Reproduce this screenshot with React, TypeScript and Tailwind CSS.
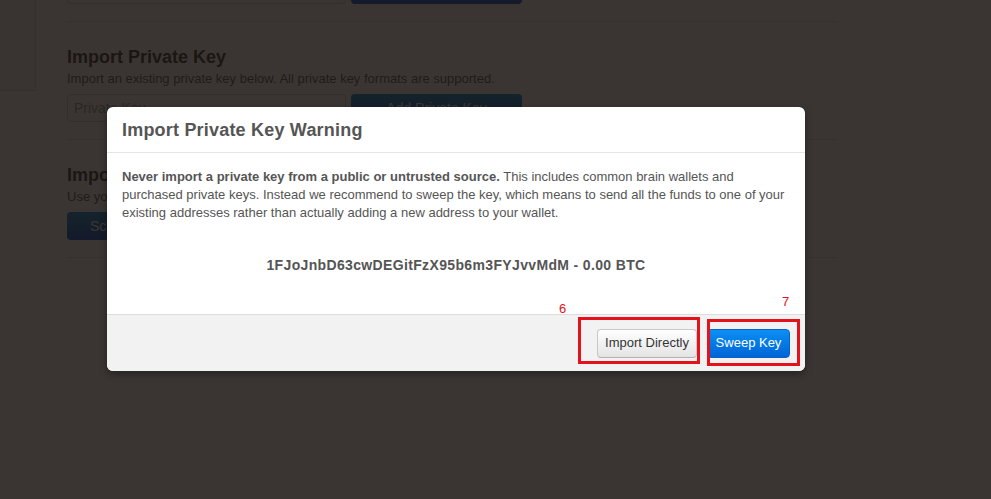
import React from "react";

const Section = ({
  title,
  subtitle,
  children,
}: {
  title: string;
  subtitle: string;
  children: React.ReactNode;
}) => (
  <div>
    <div className="mt-[17px] border-t border-b border-t-[#e5e5e5] border-b-white" />
    <h3 className="mt-[24px] text-[18px] leading-[20px] font-bold text-[#333]">{title}</h3>
    <p className="mt-[3px] text-[13px] leading-[18px] text-[#555]">{subtitle}</p>
    <div className="mt-[6px] flex">{children}</div>
  </div>
);

const App = () => {
  return (
    <div className="relative w-[991px] h-[499px] overflow-hidden bg-white font-['Liberation_Sans',Arial,sans-serif]">
      {/* page behind the modal */}
      <div className="flex">
        <div className="w-[36px] h-[91px] shrink-0 border-r border-b border-[#dcdcdc] bg-[#f7f7f7]" />
        <div className="ml-[31px] w-[770px]">
          <div className="mt-[-23px] flex">
            <div className="w-[279px] h-[27px] border border-[#ccc] rounded-[4px] bg-white" />
            <div className="ml-[5px] w-[171px] h-[27px] rounded-[4px] bg-gradient-to-b from-[#0088cc] to-[#0044cc]" />
          </div>
          <Section
            title="Import Private Key"
            subtitle="Import an existing private key below. All private key formats are supported."
          >
            <div className="w-[279px] h-[28px] border border-[#ccc] rounded-[4px] bg-white px-[6px] text-[14px] leading-[26px] text-[#999]">
              Private Key
            </div>
            <button className="ml-[5px] w-[171px] h-[28px] rounded-[4px] bg-gradient-to-b from-[#0088cc] to-[#0044cc] text-white text-[14px]">
              Add Private Key
            </button>
          </Section>
          <Section
            title="Import Watch Only Address"
            subtitle="Use your paper wallet or an address you only want to watch."
          >
            <button className="w-[140px] h-[28px] rounded-[4px] bg-gradient-to-b from-[#0088cc] to-[#0044cc] text-white text-[14px]">
              Scan QR Code
            </button>
          </Section>
          <div className="mt-[17px] border-t border-b border-t-[#e5e5e5] border-b-white" />
        </div>
      </div>

      {/* backdrop */}
      <div className="absolute inset-0 bg-[rgba(23,18,14,0.85)]" />

      {/* modal */}
      <div className="absolute left-[107px] top-[107px] w-[698px] rounded-[6px] bg-white shadow-[0_3px_7px_rgba(0,0,0,0.35)] overflow-hidden">
        <div className="px-[15px] pt-[8px] pb-[7px] border-b border-[#e5e5e5]">
          <h3 className="text-[18px] leading-[30px] font-bold text-[#555] tracking-[0.2px]">Import Private Key Warning</h3>
        </div>
        <div className="px-[15px] pt-[15px] pb-[40px] text-[13px] leading-[18px] text-[#555]">
          <p>
            <b>Never import a private key from a public or untrusted source.</b> This includes common brain wallets and
            purchased private keys. Instead we recommend to sweep the key, which means to send all the funds to one of
            your existing addresses rather than actually adding a new address to your wallet.
          </p>
          <p className="mt-[34px] text-center font-bold text-[14px] tracking-[0.35px]">
            1FJoJnbD63cwDEGitFzX95b6m3FYJvvMdM - 0.00 BTC
          </p>
        </div>
        <div className="flex justify-end items-center h-[57px] px-[15px] border-t border-[#dddddd] bg-[#f3f2f2]">
          <button className="w-[100px] h-[29px] rounded-[4px] border border-[#c8c8c8] border-b-[#b0b0b0] bg-gradient-to-b from-white to-[#e4e4e4] text-[13px] text-[#333]">
            Import Directly
          </button>
          <button className="ml-[10px] w-[83px] h-[29px] rounded-[4px] border border-[#0b62c4] bg-gradient-to-b from-[#0e8ff2] to-[#0065d8] text-[13px] text-white">
            Sweep Key
          </button>
        </div>
      </div>

      {/* annotations */}
      <div className="absolute left-[578px] top-[317px] w-[122px] h-[47px] border-[3px] border-[#e3121b]" />
      <div className="absolute left-[707px] top-[319px] w-[93px] h-[47px] border-[3px] border-[#e3121b]" />
      <span className="absolute left-[559px] top-[302px] text-[13px] leading-[14px] text-[#e3121b]">6</span>
      <span className="absolute left-[782px] top-[295px] text-[13px] leading-[14px] text-[#e3121b]">7</span>
    </div>
  );
};

export default App;
